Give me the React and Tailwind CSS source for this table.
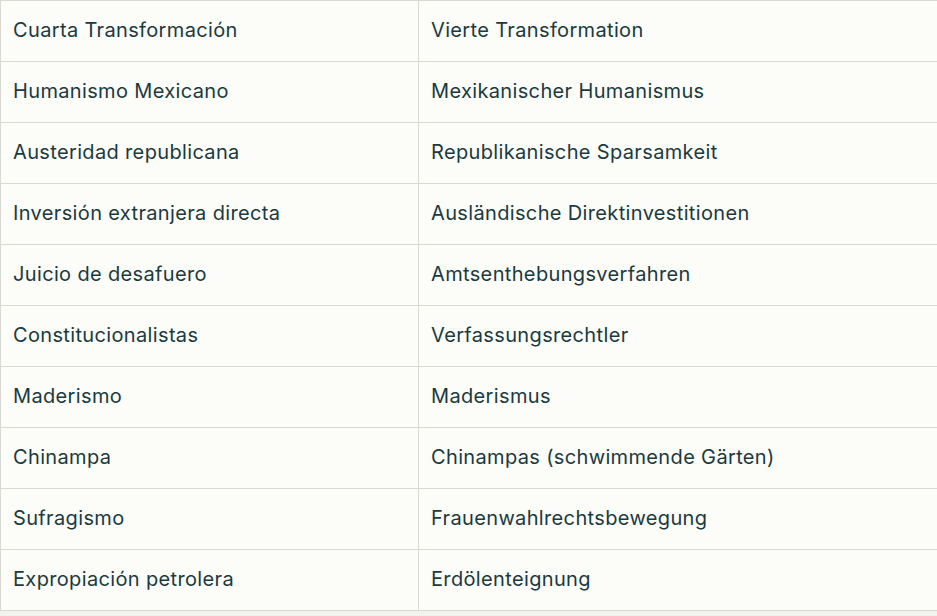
import React from 'react'

const rows = [
  ['Cuarta Transformación', 'Vierte Transformation'],
  ['Humanismo Mexicano', 'Mexikanischer Humanismus'],
  ['Austeridad republicana', 'Republikanische Sparsamkeit'],
  ['Inversión extranjera directa', 'Ausländische Direktinvestitionen'],
  ['Juicio de desafuero', 'Amtsenthebungsverfahren'],
  ['Constitucionalistas', 'Verfassungsrechtler'],
  ['Maderismo', 'Maderismus'],
  ['Chinampa', 'Chinampas (schwimmende Gärten)'],
  ['Sufragismo', 'Frauenwahlrechtsbewegung'],
  ['Expropiación petrolera', 'Erdölenteignung'],
]

export default function App() {
  return (
    <div className="w-[937px] h-[616px] overflow-hidden bg-[#f3f3ee] font-['Inter',sans-serif] text-[#1a3a40]">
      <table className="w-[945px] border-collapse bg-[#fcfcf9] text-[20px] leading-6 tracking-[0.35px] table-fixed">
        <colgroup>
          <col className="w-[418px]" />
          <col />
        </colgroup>
        <tbody>
          {rows.map(([es, de]) => (
            <tr key={es} className="h-[61px]">
              <td className="border border-[#d9d9d3] px-3 pb-[2px] align-middle">{es}</td>
              <td className="border border-[#d9d9d3] px-3 pb-[2px] align-middle">{de}</td>
            </tr>
          ))}
        </tbody>
      </table>
    </div>
  )
}
